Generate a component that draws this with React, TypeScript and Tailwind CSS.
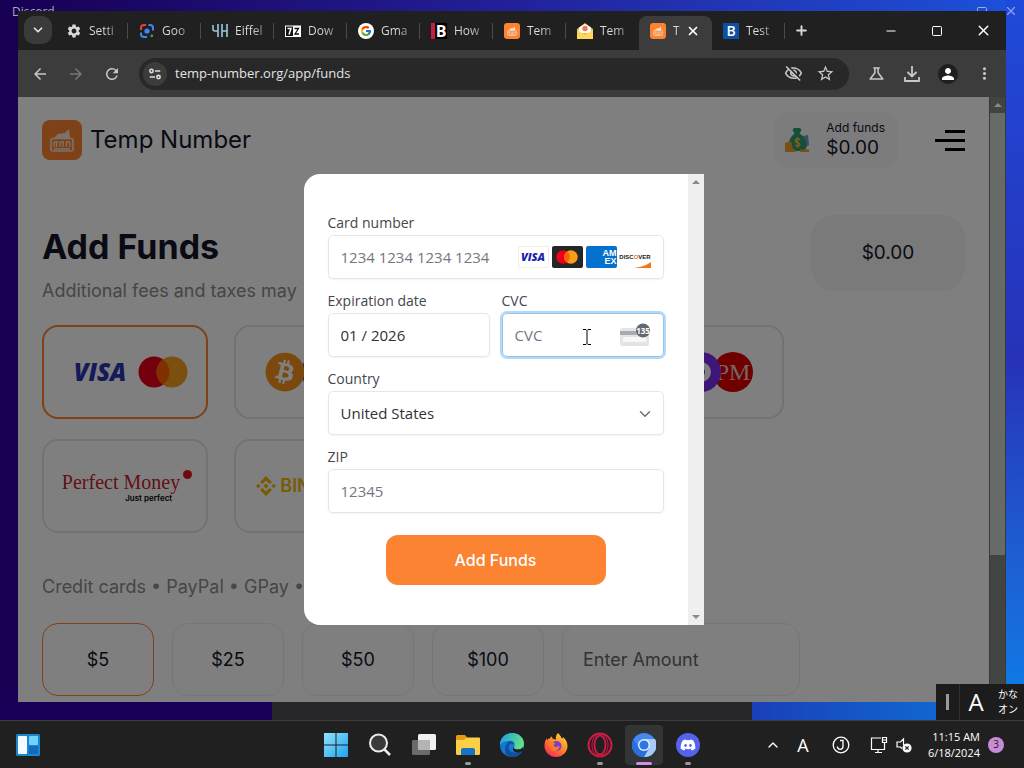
import type { ReactNode } from "react";
import { ChevronDown, ChevronUp, Minus, Plus, Square, X } from "lucide-react";
import { FaBitcoin, FaDiscord } from "react-icons/fa";
import { FcGoogle } from "react-icons/fc";
import {
  MdArrowBack,
  MdArrowForward,
  MdMoreVert,
  MdOutlineScience,
  MdOutlineVisibilityOff,
  MdPerson,
  MdRefresh,
  MdSettings,
  MdStarBorder,
} from "react-icons/md";

/* ---------- Icons ---------- */

function TempLogo({ className }: { className: string }) {
  return (
    <svg viewBox="0 0 40 40" className={className}>
      <rect width="40" height="40" rx="8" fill="#fd8331" />
      <path d="M12 18 L16 14 L23 13 L27 9 L28 18 Z" fill="#f4e4d6" />
      <rect x="9" y="18.5" width="22" height="12.5" rx="2" fill="none" stroke="#f4e4d6" strokeWidth="1.6" />
      <path d="M12 22v5M14.500 22v5M18 22v5M21 22v5M24.500 22v5M28 22v5M11.500 22h5M18 22h4M24 22h4M12 29h16" stroke="#f4e4d6" strokeWidth="1.300" />
    </svg>
  );
}

function GoogleG() {
  return (
    <span className="flex size-4 items-center justify-center rounded-full bg-white">
      <FcGoogle className="size-3" />
    </span>
  );
}

function LensIcon() {
  return (
    <svg viewBox="0 0 16 16" className="size-4" fill="none" strokeWidth="2">
      <path d="M2 7V5a3 3 0 0 1 3-3h2" stroke="#ea4335" />
      <path d="M9.500 2H11a3 3 0 0 1 3 3v2.500" stroke="#4285f4" />
      <path d="M2 9.500V11a3 3 0 0 0 3 3h3" stroke="#4285f4" />
      <circle cx="8" cy="8" r="2.600" fill="#4285f4" />
      <circle cx="12.800" cy="12.800" r="1.400" fill="#34a853" />
    </svg>
  );
}

function EiffelIcon() {
  return (
    <svg viewBox="0 0 16 16" className="size-4" fill="none" stroke="#9cc9dc" strokeWidth="1.600">
      <path d="M1 2v4q0 2 2 2h3M6 1v13M10 1v13M15 1v13M10 8h5" />
    </svg>
  );
}

function SevenZipIcon() {
  return (
    <svg viewBox="0 0 16 16" className="size-4">
      <rect x="0.500" y="3" width="15" height="10.500" fill="#111" stroke="#fff" />
      <path d="M8 3h7.500v10.500H8z" fill="#fff" />
      <path d="M2.500 5.500h3.500L4 11.500" stroke="#fff" strokeWidth="1.500" fill="none" />
      <path d="M9.500 5.500h4L10 11h4" stroke="#111" strokeWidth="1.300" fill="none" />
    </svg>
  );
}

function MailIcon() {
  return (
    <svg viewBox="0 0 16 16" className="size-4">
      <path d="M0 6 8 0l8 6v10H0z" fill="#f6b93b" />
      <path d="M2 4.500 8 1l6 3.500V10H2z" fill="#fff" />
      <circle cx="8" cy="5.500" r="2.700" fill="#ee7a5c" />
      <path d="M0 7l8 5 8-5v9H0z" fill="#fbd75e" />
    </svg>
  );
}

function LetterIcon({ kind }: { kind: "split" | "blue" }) {
  if (kind === "split") {
    return (
      <span className="flex size-4 items-center justify-center border-l-4 border-[#c81e3c] bg-black text-base font-bold leading-4 text-white">
        B
      </span>
    );
  }
  return (
    <span className="flex size-4 items-center justify-center bg-[#0d4fa3] text-sm font-semibold leading-4 text-white">
      B
    </span>
  );
}

function SiteInfoIcon() {
  return (
    <svg viewBox="0 0 16 16" className="size-[14px]" fill="none" stroke="#dedede" strokeWidth="1.800">
      <circle cx="4" cy="4.500" r="1.900" />
      <path d="M8 4.500h6M2 11.500h6" />
      <circle cx="12" cy="11.500" r="1.900" />
    </svg>
  );
}

function DownloadIcon() {
  return (
    <svg viewBox="0 0 18 18" className="size-[18px]" fill="none" stroke="#c7c7c7" strokeWidth="1.800">
      <path d="M9 1v10M4.500 7 9 11.500 13.500 7M2 12v4h14v-4" />
    </svg>
  );
}

function MoneyBagIcon() {
  return (
    <svg viewBox="0 0 26 26" className="size-[26px]">
      <path d="M14 10l10-2 1 10-6 4z" fill="#6f9fc4" />
      <path d="M10 1h6l1.500 2-2 3.500c5 3 7 8 7 12 0 4-2 5.500-5 5.500H9c-3 0-4.500-2-4.500-5 0-5 2-9.500 6-12.500L8.500 3z" fill="#2f9c74" />
      <path d="M1 16l6-2 3 10.500H1z" fill="#f09a2c" />
      <path d="M16 12.500c-3-1.500-5 .2-4.500 1.700.6 1.900 4.500 1.300 4.300 3.400-.2 1.800-3 2-4.600.6M13.500 10v10.500" stroke="#f0c040" strokeWidth="1.500" fill="none" />
      <path d="M16 22.500h9v2.500h-9zM1 22.500h11v2.500H1z" fill="#e8a13a" />
    </svg>
  );
}

function Visa({ size }: { size: "sm" | "lg" }) {
  return (
    <span
      className={
        size === "sm"
          ? "font-['Open_Sans'] text-[11px] font-extrabold italic text-[#1a1fae]"
          : "font-['Open_Sans'] text-2xl font-extrabold italic text-[#2a34b0]"
      }
    >
      VISA
    </span>
  );
}

function MastercardMark({ className }: { className: string }) {
  return (
    <svg viewBox="0 0 50 32" className={className}>
      <circle cx="16" cy="16" r="15.500" fill="#eb001b" />
      <circle cx="34" cy="16" r="15.500" fill="#f79e1b" />
      <path d="M25 3.400a15.500 15.500 0 0 1 0 25.200 15.500 15.500 0 0 1 0-25.200" fill="#ff5f00" />
    </svg>
  );
}

function AmexMark() {
  return (
    <span className="flex h-[22px] w-[31px] flex-col items-end justify-center rounded-xs bg-[#0571ce] font-['Liberation_Sans'] text-[9px] font-bold leading-2 text-white">
      <span>AM</span>
      <span>EX</span>
    </span>
  );
}

function DiscoverMark() {
  return (
    <span className="relative flex h-[22px] w-[31px] items-center justify-center rounded-xs bg-white font-['Liberation_Sans'] text-[6px] font-bold text-[#222]">
      <svg viewBox="0 0 31 22" className="absolute inset-0 size-full">
        <path d="M31 16v6H14c8-1 13-3 17-6z" fill="#f27712" />
      </svg>
      <span className="relative">
        DISC<span className="text-[#f27712]">O</span>VER
      </span>
    </span>
  );
}

function CvcIcon() {
  return (
    <svg viewBox="0 0 32 24" className="h-6 w-8">
      <rect x="1" y="5" width="29" height="18" rx="2.500" fill="#e3e4e6" />
      <path d="M1 8h29v4H1z" fill="#a9abae" />
      <rect x="4" y="14" width="23" height="5" fill="#f7f7f7" />
      <circle cx="24" cy="7.500" r="7" fill="#66686c" />
      <text x="24" y="10.500" textAnchor="middle" fontSize="8" fontWeight="700" fontFamily="Open Sans" fill="#fff">
        135
      </text>
    </svg>
  );
}

function BinanceIcon() {
  return (
    <svg viewBox="0 0 20 20" className="size-5" fill="#f0b90b">
      <path d="M10 0l6 6-2.300 2.300L10 4.600 6.300 8.300 4 6zM10 20l6-6-2.300-2.300L10 15.400l-3.700-3.700L4 14zM10 7.500l2.500 2.500-2.500 2.500L7.500 10zM2.300 7.700 4.600 10l-2.300 2.300L0 10zM17.700 7.700 20 10l-2.300 2.300L15.400 10z" />
    </svg>
  );
}

function StartIcon() {
  return (
    <svg viewBox="0 0 24 24" className="size-6">
      <defs>
        <linearGradient id="start" x1="0" y1="0" x2="1" y2="1">
          <stop offset="0" stopColor="#8fe3ff" />
          <stop offset="1" stopColor="#1fa4ee" />
        </linearGradient>
      </defs>
      <path d="M0 0h11.500v11.500H0zM12.500 0H24v11.500H12.500zM0 12.500h11.500V24H0zM12.500 12.500H24V24H12.500z" fill="url(#start)" />
    </svg>
  );
}

function SearchIcon() {
  return (
    <svg viewBox="0 0 24 24" className="size-6" fill="none" stroke="#ececec">
      <circle cx="10.500" cy="10" r="8.500" strokeWidth="2" fill="#3a3a3a" />
      <path d="M16.500 16.500 22 22" strokeWidth="2.500" />
    </svg>
  );
}

function TaskViewIcon() {
  return (
    <svg viewBox="0 0 26 24" className="h-6 w-[26px]">
      <rect x="7" y="1" width="18" height="16" rx="1.500" fill="#f1f1f1" />
      <rect x="1" y="7" width="18" height="15" rx="1.500" fill="#6b6b6b" />
      <rect x="7" y="7" width="12" height="10" fill="#b4b4b4" />
    </svg>
  );
}

function FolderIcon() {
  return (
    <svg viewBox="0 0 26 24" className="h-6 w-[26px]">
      <path d="M1 3.500A1.500 1.500 0 0 1 2.500 2H10l2.500 3H24v6H1z" fill="#e59b18" />
      <path d="M1 7h8l2.500-2.500H24A1 1 0 0 1 25 5.500v15a1.500 1.500 0 0 1-1.500 1.500h-21A1.500 1.500 0 0 1 1 20.500z" fill="#fdcf46" />
      <path d="M6 22v-5a2 2 0 0 1 2-2h10a2 2 0 0 1 2 2v5z" fill="#1673c6" />
    </svg>
  );
}

function EdgeIcon() {
  return (
    <svg viewBox="0 0 24 24" className="size-6">
      <defs>
        <linearGradient id="edge" x1="0" y1="0" x2="1" y2="0.300">
          <stop offset="0" stopColor="#1d9ae6" />
          <stop offset="1" stopColor="#5fe08a" />
        </linearGradient>
      </defs>
      <circle cx="12" cy="12" r="12" fill="#1677cf" />
      <path d="M0 12C0 5 5 0 12 0s12 5 12 10.500c0 4-3 6-6.500 6-2.500 0-4-1-3.500-2.200 2-3.300 0-6.500-4-6.500C5 7.800 1 10 0 12z" fill="url(#edge)" />
      <path d="M9 12c-2 6 4 10 13 6-3 5-8 6.500-12 5.800C4 22 3 13 9 8.500c2-.7 4.500.2 5 2.500-2-1-4-.5-5 1z" fill="#0f4f9f" />
      <path d="M14 14.300c-.5 1.200 1 2.200 3.500 2.200 2.500 0 4-.8 5.200-2.200l.8 3.200c-4 3-9.500 2.500-10.500-.5-.5-1.500 1-2.700 1-2.700z" fill="#202020" />
    </svg>
  );
}

function FirefoxIcon() {
  return (
    <svg viewBox="0 0 24 24" className="size-6">
      <defs>
        <linearGradient id="fox" x1="1" y1="0" x2="0.300" y2="1">
          <stop offset="0" stopColor="#ffe14d" />
          <stop offset="0.450" stopColor="#ff9a1f" />
          <stop offset="1" stopColor="#fb2b57" />
        </linearGradient>
      </defs>
      <path d="M14 0c2 2 3 3.500 3.500 5C19 6 19 5 19 4c3.500 3 4.500 6 4.500 9 0 6-5 11-11.500 11S.500 19 .500 13c0-3 .5-6 2.500-8v2.500C4 6 5 5.500 6 5.300l1.500-2L9 6l3 .5C11.500 4 12 2 14 0z" fill="url(#fox)" />
      <circle cx="12.500" cy="13" r="5" fill="#7a3ecf" />
      <path d="M5 9c3 0 5 0 6.500 2-2 .5-2.500 1.500-1 2.500 1.500 1 3.500 0 5-.8 0 4-4 6-7 5C5.500 16.500 4.500 13 5 9z" fill="#ff7a28" />
    </svg>
  );
}

function OperaIcon() {
  return (
    <svg viewBox="0 0 26 26" className="size-[26px]" fill="none" stroke="#c81e45">
      <circle cx="13" cy="13" r="11.500" strokeWidth="2" fill="#341620" />
      <ellipse cx="13" cy="13" rx="5.500" ry="9.500" strokeWidth="1.800" fill="#202020" />
      <path d="M13 1.500C7 3 5 8 5 13s2 10 8 11.500C19 23 21 18 21 13S19 3 13 1.500" />
    </svg>
  );
}

function ChromiumIcon() {
  return (
    <svg viewBox="0 0 24 24" className="size-6">
      <circle cx="12" cy="12" r="12" fill="#4688f1" />
      <path d="M12 6h11a12 12 0 0 1-11 18l5-9z" fill="#a9cbfb" />
      <path d="M1.600 6A12 12 0 0 0 12 24l5-9H7z" fill="#2a6fe0" />
      <circle cx="12" cy="12" r="6" fill="#e8f1fe" />
      <circle cx="12" cy="12" r="4.600" fill="#2e76e6" />
    </svg>
  );
}

function DiscordIcon() {
  return (
    <span className="flex size-6 items-center justify-center rounded-full bg-[#5562ea]">
      <FaDiscord className="size-4 text-white" />
    </span>
  );
}

function WidgetsIcon() {
  return (
    <svg viewBox="0 0 24 22" className="h-[22px] w-6">
      <rect width="24" height="22" rx="1.500" fill="#1b86d2" />
      <rect x="2" y="2" width="9" height="18" rx="1" fill="#f4fafd" />
      <rect x="13" y="2" width="9" height="9" rx="1" fill="#6fd3fb" />
      <rect x="13" y="12" width="9" height="8" rx="1" fill="#1668b8" />
    </svg>
  );
}

/* ---------- Browser chrome ---------- */

interface Tab {
  title: string;
  icon: ReactNode;
  active?: boolean;
  divider?: boolean;
}

const tabs: Tab[] = [
  { title: "Setti", icon: <MdSettings className="size-4 text-[#d8d8d8]" />, divider: true },
  { title: "Goo", icon: <LensIcon />, divider: true },
  { title: "Eiffel", icon: <EiffelIcon />, divider: true },
  { title: "Dow", icon: <SevenZipIcon />, divider: true },
  { title: "Gma", icon: <GoogleG />, divider: true },
  { title: "How", icon: <LetterIcon kind="split" />, divider: true },
  { title: "Tem", icon: <TempLogo className="size-4" />, divider: true },
  { title: "Tem", icon: <MailIcon /> },
  { title: "T", icon: <TempLogo className="size-4" />, active: true },
  { title: "Test", icon: <LetterIcon kind="blue" />, divider: true },
];

function TabItem({ title, icon, active, divider }: Tab) {
  return (
    <div
      className={
        active
          ? "flex h-[34px] w-[73px] items-center rounded-t-lg bg-[#3c3c3c] pb-1 pl-[11px] pr-3"
          : "flex h-[34px] w-[73px] items-center pb-1 pl-[11px]"
      }
    >
      <span className="shrink-0">{icon}</span>
      <span className="ml-[7px] whitespace-nowrap bg-linear-to-r from-[#dedede] from-60% to-[#8a8a8a] bg-clip-text text-xs text-transparent">
        {title}
      </span>
      {active && (
        <button aria-label="Close tab" className="ml-auto">
          <X className="size-[14px] text-white" strokeWidth={3} />
        </button>
      )}
      {divider && <span className="ml-auto h-4 w-px bg-[#4a4a4a]" />}
    </div>
  );
}

function TabStrip() {
  return (
    <div className="flex h-[39px] items-end bg-[#202020]">
      <button
        aria-label="Search tabs"
        className="mb-[6px] ml-[6px] mr-[3px] flex size-7 items-center justify-center rounded-[10px] bg-[#3a3a3a] text-[#e3e3e3]"
      >
        <ChevronDown className="size-[14px]" strokeWidth={3} />
      </button>
      {tabs.map((tab, i) => (
        <TabItem key={i} {...tab} />
      ))}
      <button aria-label="New tab" className="flex h-10 w-8 items-center justify-center text-[#d8d8d8]">
        <Plus className="size-[15px]" strokeWidth={3} />
      </button>
      <div className="ml-auto flex h-full text-white">
        <button aria-label="Minimize" className="flex w-[46px] items-center justify-center">
          <Minus className="size-[14px]" strokeWidth={2} />
        </button>
        <button aria-label="Maximize" className="flex w-[46px] items-center justify-center">
          <Square className="size-3" strokeWidth={2} />
        </button>
        <button aria-label="Close" className="flex w-[46px] items-center justify-center">
          <X className="size-[17px]" strokeWidth={2} />
        </button>
      </div>
    </div>
  );
}

function ToolbarButton({ label, children }: { label: string; children: ReactNode }) {
  return (
    <button aria-label={label} className="flex h-8 w-9 items-center justify-center text-[#c7c7c7]">
      {children}
    </button>
  );
}

function Toolbar() {
  return (
    <div className="flex h-[47px] items-center bg-[#3c3c3c] pl-1 pr-1">
      <ToolbarButton label="Back">
        <MdArrowBack className="size-[18px]" />
      </ToolbarButton>
      <ToolbarButton label="Forward">
        <MdArrowForward className="size-[18px] text-[#777]" />
      </ToolbarButton>
      <ToolbarButton label="Reload">
        <MdRefresh className="size-[18px]" />
      </ToolbarButton>
      <div className="mx-[9px] flex h-8 flex-1 items-center rounded-full bg-[#282828] pl-1 pr-2">
        <button aria-label="Site information" className="flex size-6 items-center justify-center rounded-full bg-[#3c3c3c]">
          <SiteInfoIcon />
        </button>
        <input
          aria-label="Address"
          className="ml-2 min-w-0 flex-1 bg-transparent text-[13px] text-[#e3e3e3] outline-none"
          defaultValue="temp-number.org/app/funds"
        />
        <button aria-label="Tracking protection" className="flex w-8 justify-center text-[#c7c7c7]">
          <MdOutlineVisibilityOff className="size-[19px]" />
        </button>
        <button aria-label="Bookmark" className="flex w-8 justify-center text-[#c7c7c7]">
          <MdStarBorder className="size-[19px]" />
        </button>
      </div>
      <ToolbarButton label="Labs">
        <MdOutlineScience className="size-[19px]" />
      </ToolbarButton>
      <ToolbarButton label="Downloads">
        <DownloadIcon />
      </ToolbarButton>
      <ToolbarButton label="Profile">
        <span className="flex size-5 items-center justify-center rounded-full bg-[#1f1f1f]">
          <MdPerson className="size-[18px] text-white" />
        </span>
      </ToolbarButton>
      <ToolbarButton label="Menu">
        <MdMoreVert className="size-[19px]" />
      </ToolbarButton>
    </div>
  );
}

/* ---------- Page ---------- */

function MethodCard({ label, selected, children }: { label: string; selected?: boolean; children: ReactNode }) {
  return (
    <button
      aria-label={label}
      className={
        selected
          ? "flex h-[94px] items-center justify-center rounded-2xl border-2 border-[#fd8331]"
          : "flex h-[94px] items-center justify-center rounded-2xl border-2 border-[#e4e4e4]"
      }
    >
      {children}
    </button>
  );
}

function AmountButton({ amount, selected }: { amount: string; selected?: boolean }) {
  return (
    <button
      className={
        selected
          ? "h-[73px] w-28 rounded-2xl border border-[#fd8331] text-lg"
          : "h-[73px] w-28 rounded-2xl border border-[#ececec] text-lg"
      }
    >
      {amount}
    </button>
  );
}

function FundsPage() {
  return (
    <main className="isolate h-full overflow-hidden bg-white px-6 pt-[15px] font-[Inter,sans-serif] text-[#14142b]">
      <header className="flex h-14 items-center">
        <a href="#home" className="flex items-center gap-2">
          <TempLogo className="size-10" />
          <span className="text-2xl">Temp Number</span>
        </a>
        <a href="#funds" className="ml-auto flex h-14 items-center gap-4 rounded-xl bg-[#f8f8f8] pl-[10px] pr-3">
          <MoneyBagIcon />
          <span className="flex flex-col">
            <span className="text-xs leading-4">Add funds</span>
            <span className="text-[19px] leading-6">$0.00</span>
          </span>
        </a>
        <button aria-label="Open menu" className="ml-9 flex w-8 flex-col items-end gap-[6px]">
          <span className="h-[3px] w-5 bg-black" />
          <span className="h-[3px] w-[30px] bg-black" />
          <span className="h-[3px] w-5 bg-black" />
        </button>
      </header>

      <section className="mt-[47px] flex items-start justify-between">
        <div className="pt-[10px]">
          <h1 className="text-[34px] font-bold leading-11">Add Funds</h1>
          <p className="mt-[10px] text-lg/6 text-[#8c8c8c]">Additional fees and taxes may</p>
        </div>
        <div className="flex h-[76px] w-[154px] items-center justify-center rounded-3xl bg-[#f4f4f4] text-[19px]">$0.00</div>
      </section>

      <section className="mt-[22px] grid grid-cols-[repeat(4,166px)] gap-x-[26px] gap-y-5">
        <MethodCard label="Visa and Mastercard" selected>
          <span className="flex items-center gap-3 pl-3">
            <Visa size="lg" />
            <MastercardMark className="h-8 w-[50px]" />
          </span>
        </MethodCard>
        <MethodCard label="Crypto">
          <span className="flex items-center -space-x-1">
            <FaBitcoin className="z-10 size-10 text-[#f7931a]" />
            <span className="size-9 rounded-full bg-[#3a62d8]" />
            <span className="size-9 rounded-full bg-[#26a17b]" />
          </span>
        </MethodCard>
        <MethodCard label="Wallets">
          <span className="size-10 rounded-full bg-[#26a17b]" />
        </MethodCard>
        <MethodCard label="E-currency">
          <span className="flex items-center -space-x-2">
            <span className="size-10 rounded-full bg-[#26a17b]" />
            <span className="z-10 flex size-10 items-center justify-center rounded-full bg-[#7b2cf0]">
              <span className="size-5 rounded-full border-[6px] border-white" />
            </span>
            <span className="flex size-10 items-center justify-center rounded-full bg-[#e00000] font-['Liberation_Serif'] text-2xl text-[#e8cccc]">
              PM
            </span>
          </span>
        </MethodCard>
        <MethodCard label="Perfect Money">
          <span className="relative flex flex-col items-end pl-1 pr-3">
            <span className="font-['Liberation_Serif'] text-xl leading-6 text-[#c8202c]">Perfect Money</span>
            <span className="pr-2 text-[8px] font-semibold leading-2 text-black">Just perfect</span>
            <span className="absolute right-0 top-0 size-[9px] rounded-full bg-[#e01020]" />
          </span>
        </MethodCard>
        <MethodCard label="Binance">
          <span className="flex items-center gap-1 pr-4 text-lg font-semibold text-[#f0b90b]">
            <BinanceIcon />
            BINANCE
          </span>
        </MethodCard>
      </section>

      <p className="mt-[42px] text-lg/6 text-[#8c8c8c]">Credit cards • PayPal • GPay • Apple Pay</p>

      <section className="mt-6 flex gap-[18px]">
        <AmountButton amount="$5" selected />
        <AmountButton amount="$25" />
        <AmountButton amount="$50" />
        <AmountButton amount="$100" />
        <input
          aria-label="Enter amount"
          placeholder="Enter Amount"
          className="h-[73px] w-[238px] rounded-2xl border border-[#ececec] px-5 text-lg placeholder:text-[#666]"
        />
      </section>
    </main>
  );
}

/* ---------- Payment dialog ---------- */

function Field({ id, label, children }: { id: string; label: string; children: ReactNode }) {
  return (
    <div className="relative min-w-0">
      <label htmlFor={id} className="mb-0.5 block text-sm/5 text-[#45464f]">
        {label}
      </label>
      {children}
    </div>
  );
}

function PaymentDialog() {
  return (
    <div
      role="dialog"
      aria-label="Add funds"
      className="flex w-[400px] max-w-full overflow-hidden rounded-l-2xl bg-white font-['Open_Sans',sans-serif]"
    >
      <form className="flex min-w-0 flex-1 flex-col gap-3 px-6 pb-10 pt-[39px]">
        <Field id="card" label="Card number">
          <div className="flex h-11 items-center gap-[3px] rounded-[5px] border border-[#e6e6e6] pl-3 pr-3 shadow-xs">
            <input
              id="card"
              placeholder="1234 1234 1234 1234"
              className="h-full min-w-0 flex-1 text-[15px] outline-none placeholder:text-[#757680]"
            />
            <span className="flex h-[22px] w-[31px] items-center justify-center rounded-xs border border-[#eee] bg-white">
              <Visa size="sm" />
            </span>
            <span className="flex h-[22px] w-[31px] items-center justify-center rounded-xs bg-[#252525]">
              <MastercardMark className="h-[14px] w-[22px]" />
            </span>
            <AmexMark />
            <DiscoverMark />
          </div>
        </Field>
        <div className="grid grid-cols-2 gap-3">
          <Field id="expiry" label="Expiration date">
            <input
              id="expiry"
              defaultValue="01 / 2026"
              className="h-11 w-full rounded-[5px] border border-[#e6e6e6] px-3 text-[15px] text-[#30313d] shadow-xs outline-none"
            />
          </Field>
          <Field id="cvc" label="CVC">
            <div className="flex h-11 items-center rounded-[5px] border border-[#8fc4f3] pl-3 pr-3 ring-2 ring-[#b5d8f7]">
              <input
                id="cvc"
                placeholder="CVC"
                className="h-full min-w-0 flex-1 text-[15px] outline-none placeholder:text-[#757680]"
              />
              <CvcIcon />
            </div>
            {/* text cursor */}
            <svg viewBox="0 0 8 16" className="absolute bottom-3 left-1/2 h-4 w-2" fill="none" stroke="#000">
              <path d="M0 .5h3l1 1 1-1h3M4 1.500v13M0 15.500h3l1-1 1 1h3" />
            </svg>
          </Field>
        </div>
        <Field id="country" label="Country">
          <select
            id="country"
            className="h-11 w-full appearance-none rounded-[5px] border border-[#e6e6e6] bg-white px-3 text-[15px] text-[#30313d] shadow-xs"
          >
            <option>United States</option>
          </select>
          <ChevronDown className="pointer-events-none absolute bottom-3 right-2.5 size-[18px] text-[#6d6e78]" />
        </Field>
        <Field id="zip" label="ZIP">
          <input
            id="zip"
            placeholder="12345"
            className="h-11 w-full rounded-[5px] border border-[#e6e6e6] px-3 text-[15px] shadow-xs outline-none placeholder:text-[#757680]"
          />
        </Field>
        <button
          type="button"
          className="mt-[10px] h-[50px] w-[220px] self-center rounded-xl bg-[#fb8332] font-[Inter,sans-serif] text-base font-medium text-white"
        >
          Add Funds
        </button>
      </form>
      <div className="flex w-4 shrink-0 flex-col items-center justify-between bg-[#efefef] py-1.5">
        <span className="border-x-4 border-b-4 border-x-transparent border-b-[#8a8a8a]" />
        <span className="border-x-4 border-t-4 border-x-transparent border-t-[#8a8a8a]" />
      </div>
    </div>
  );
}

function BrowserWindow() {
  return (
    <div className="relative flex min-h-0 flex-1 flex-col overflow-hidden font-['Open_Sans',sans-serif]">
      <TabStrip />
      <Toolbar />
      <div className="flex min-h-0 flex-1">
        <div className="relative min-w-0 flex-1">
          <FundsPage />
          <div className="absolute inset-0 flex items-center justify-center bg-black/50">
            <PaymentDialog />
          </div>
        </div>
        <div className="flex w-[17px] shrink-0 flex-col items-center border-x border-[#383838] bg-[#414441]">
          <span className="my-[6px] border-x-4 border-b-4 border-x-transparent border-b-[#8a8a8a]" />
          <span className="h-[73%] w-full bg-[#666b67]" />
        </div>
      </div>
    </div>
  );
}

/* ---------- Taskbar ---------- */

const apps = [
  { name: "Start", icon: <StartIcon /> },
  { name: "Search", icon: <SearchIcon /> },
  { name: "Task view", icon: <TaskViewIcon /> },
  { name: "File Explorer", icon: <FolderIcon />, running: true },
  { name: "Edge", icon: <EdgeIcon /> },
  { name: "Firefox", icon: <FirefoxIcon /> },
  { name: "Opera", icon: <OperaIcon />, running: true },
  { name: "Chromium", icon: <ChromiumIcon />, active: true },
  { name: "Discord", icon: <DiscordIcon />, running: true },
];

function Taskbar() {
  return (
    <footer className="grid h-12 grid-cols-[1fr_auto_1fr] items-center border-t border-[#3b3b3b] bg-[#202020] font-['Open_Sans',sans-serif] text-white">
      <button aria-label="Widgets" className="ml-4 justify-self-start">
        <WidgetsIcon />
      </button>
      <nav className="flex">
        {apps.map((app) => (
          <button key={app.name} aria-label={app.name} className="flex w-11 justify-center">
            <span
              className={
                app.active
                  ? "relative flex h-10 w-[38px] items-center justify-center rounded-sm bg-[#323436]"
                  : "relative flex h-10 w-[38px] items-center justify-center"
              }
            >
              {app.icon}
              {app.running && <span className="absolute bottom-0 h-[3px] w-[6px] rounded-full bg-[#9a9a9a]" />}
              {app.active && <span className="absolute bottom-0 h-[3px] w-4 rounded-full bg-[#d68ae0]" />}
            </span>
          </button>
        ))}
      </nav>
      <div className="flex items-center justify-self-end pr-5">
        <ChevronUp className="size-4" />
        <span className="ml-3 w-5 text-center text-lg leading-5">A</span>
        <svg viewBox="0 0 18 18" className="ml-[19px] size-[18px]" fill="none" stroke="#fff" strokeWidth="1.300">
          <circle cx="9" cy="9" r="7.800" />
          <path d="M8 4.500h3v6a2.800 2.800 0 0 1-5.600 0" />
        </svg>
        <svg viewBox="0 0 18 18" className="ml-5 size-[18px]" fill="none" stroke="#fff" strokeWidth="1.200">
          <path d="M11 2H1.500v11.500h13V9M5 16.500h7M8 13.500v3M12.500 1.500h4v5h-4zM14.500 6.500V9M12.500 4h4" />
        </svg>
        <svg viewBox="0 0 16 16" className="ml-2 size-4" fill="none" stroke="#fff" strokeWidth="1.200">
          <path d="M7.500 8V2L4.500 5H1v5h3.500l1.500 1.500" />
          <circle cx="11" cy="11" r="4" fill="#fff" />
          <path d="M9.300 9.300l3.400 3.400M12.700 9.300l-3.400 3.400" stroke="#202020" />
        </svg>
        <span className="ml-4 text-right text-[11px] leading-4">
          11:15 AM
          <br />
          6/18/2024
        </span>
        <span className="ml-2 flex size-4 items-center justify-center rounded-full bg-[#c98ad8] text-[10px] text-[#202020]">3</span>
      </div>
    </footer>
  );
}

export default function App() {
  return (
    <div className="flex h-screen flex-col overflow-hidden bg-[#202020]">
      <div className="relative flex min-h-0 flex-1 flex-col bg-linear-to-r from-[#170052] via-[#22209a] to-[#1a52dc] px-[18px] pb-[18px] pt-[11px]">
        <div className="absolute inset-y-0 right-0 w-[18px] bg-linear-to-b from-[#1f4ad9] via-[#2632b8] to-[#087fe8]" />
        <div className="absolute inset-x-0 bottom-0 flex h-[18px]">
          <div className="w-[272px] bg-[#180058]" />
          <div className="w-[480px] bg-[#26262b]" />
          <div className="flex-1 bg-linear-to-r from-[#1a3fb8] to-[#0a78dc]" />
        </div>
        {/* window left open behind the browser */}
        <span className="absolute left-3 top-1 font-['Open_Sans'] text-xs text-[#a9a9c4]">Discord</span>
        <Square className="absolute right-9 top-[6px] size-3 text-[#9ab0ee]" />
        <X className="absolute right-[6px] top-1 size-[14px] text-[#8fa6ee]" />
        <BrowserWindow />
        {/* IME bar */}
        <div className="absolute bottom-0 right-0 flex h-9 w-[88px] items-center bg-[#1c1c1c] font-['Open_Sans','Noto_Sans_CJK_JP',sans-serif] text-white">
          <span className="flex h-full w-6 items-center justify-center border-r border-[#303030]">
            <span className="h-4 w-[3px] bg-[#9a9a9a]" />
          </span>
          <span className="w-8 text-center text-2xl">A</span>
          <span className="flex-1 text-center text-[10px] leading-[15px]">
            かな
            <br />
            オン
          </span>
        </div>
      </div>
      <Taskbar />
    </div>
  );
}
